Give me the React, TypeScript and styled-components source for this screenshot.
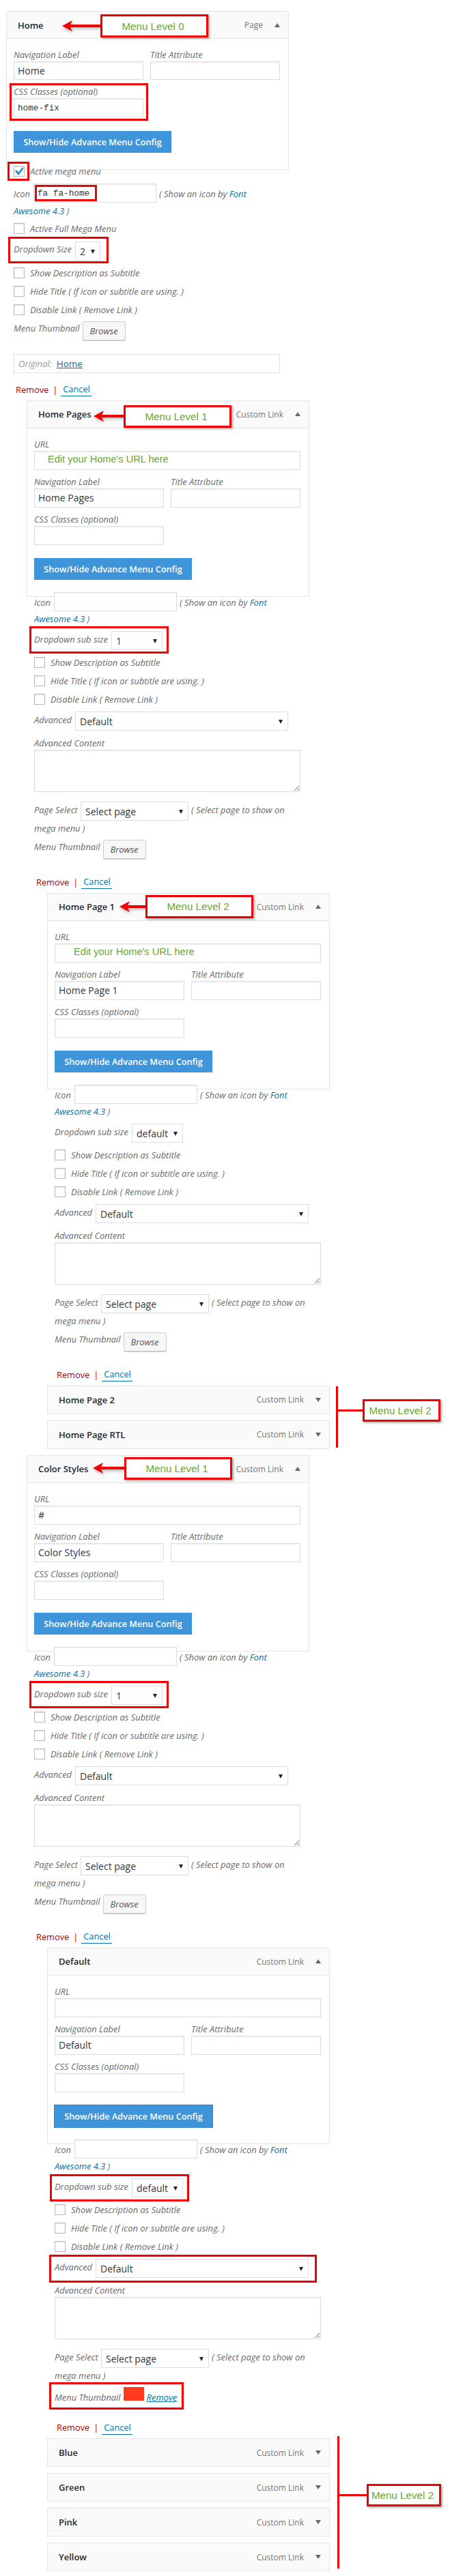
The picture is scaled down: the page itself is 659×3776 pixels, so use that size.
import React from "react";
import styled, { createGlobalStyle } from "styled-components";

const RED = "#f00000";
const GREEN = "#68a82c";
const LABEL = "#6a6a6a";
const LINK = "#0073aa";

const Global = createGlobalStyle`
  html, body { margin: 0; padding: 0; background: #fff; }
  body { font-family: "Open Sans", "Liberation Sans", sans-serif; font-size: 13px; color: #444; }
  * { box-sizing: border-box; }
`;

const Page = styled.main`
  width: 659px;
  height: 3776px;
  padding-top: 16px;
  overflow: hidden;
`;

const Block = styled.section<{ $depth: number }>`
  margin-left: ${(p) => 9 + p.$depth * 30}px;
  width: 414px;
`;

const Card = styled.div`
  width: 414px;
  border: 1px solid #e5e5e5;
  background: #fff;
`;

const Header = styled.div<{ $open?: boolean }>`
  position: relative;
  display: flex;
  align-items: center;
  height: 40px;
  padding: 0 12px 0 16px;
  background: #fafafa;
  border-bottom: ${(p) => (p.$open ? "1px solid #e5e5e5" : "0")};
`;

const Title = styled.h3`
  margin: 0;
  font-size: 13px;
  font-weight: 600;
  color: #23282d;
`;

const Kind = styled.span`
  margin-left: auto;
  font-size: 12px;
  color: #777;
`;

const Caret = styled.span<{ $up?: boolean }>`
  margin-left: 17px;
  width: 0;
  height: 0;
  border-left: 4px solid transparent;
  border-right: 4px solid transparent;
  ${(p) => (p.$up ? "border-bottom: 6px solid #666;" : "border-top: 6px solid #666;")}
`;

const Body = styled.div`
  padding: 13px 12px 24px 10px;
`;

const Label = styled.label<{ $mt?: number; $minW?: number }>`
  display: block;
  flex: none;
  margin-top: ${(p) => p.$mt ?? 0}px;
  min-width: ${(p) => p.$minW ?? 0}px;
  font-style: italic;
  font-size: 12.9px;
  line-height: 20px;
  color: ${LABEL};
  white-space: nowrap;
`;

const Note = styled(Label)`
  color: ${LABEL};
`;

const NoteLink = styled.a`
  color: ${LINK};
  font-style: italic;
`;

const Field = styled.div<{ $mt?: number }>`
  position: relative;
  margin-top: ${(p) => p.$mt ?? 0}px;
`;

const FieldPair = styled.div<{ $mt?: number }>`
  display: grid;
  grid-template-columns: 190px 190px;
  column-gap: 10px;
  margin-top: ${(p) => p.$mt ?? 0}px;
`;

const TextBox = styled.div<{ $h?: number; $w?: number; $pad?: number; $mono?: boolean; $accent?: boolean }>`
  position: relative;
  flex: none;
  width: ${(p) => (p.$w ? `${p.$w}px` : "100%")};
  height: ${(p) => p.$h ?? 28}px;
  padding-left: ${(p) => p.$pad ?? 5}px;
  padding-bottom: ${(p) => (p.$accent ? 3 : 0)}px;
  border: 1px solid #ddd;
  background: #fff;
  box-shadow: inset 0 1px 2px rgba(0, 0, 0, 0.07);
  display: flex;
  align-items: center;
  white-space: nowrap;
  color: ${(p) => (p.$accent ? GREEN : "#32373c")};
  font-family: ${(p) =>
    p.$accent ? '"Liberation Sans", Arial, sans-serif' : p.$mono ? '"Liberation Mono", monospace' : "inherit"};
  font-size: ${(p) => (p.$accent ? 14.6 : p.$mono ? 12.7 : 14)}px;
`;

const ConfigButton = styled.button<{ $mt: number; $focus?: boolean }>`
  display: block;
  width: 231px;
  height: 32px;
  margin-top: ${(p) => p.$mt}px;
  padding: 0;
  border: 0;
  background: #3f95da;
  color: #fff;
  font-family: inherit;
  font-size: 12.7px;
  font-weight: 600;
  ${(p) => (p.$focus ? "box-shadow: 0 0 0 1px #2f80c0;" : "")}
`;

const Settings = styled.div<{ $overlap: number }>`
  position: relative;
  margin-top: -${(p) => p.$overlap}px;
  padding-left: 11px;
`;

const Row = styled.div<{ $mt?: number; $gap?: number; $h?: number }>`
  position: relative;
  display: flex;
  align-items: flex-start;
  gap: ${(p) => p.$gap ?? 4}px;
  margin-top: ${(p) => p.$mt ?? 0}px;
  ${(p) => (p.$h ? `height: ${p.$h}px;` : "")}
`;

const CheckRow = styled.div<{ $mt?: number }>`
  position: relative;
  display: flex;
  align-items: center;
  gap: 8px;
  height: 27px;
  margin-top: ${(p) => p.$mt ?? 0}px;
`;

const CheckBox = styled.span`
  flex: none;
  display: flex;
  align-items: center;
  justify-content: center;
  width: 16px;
  height: 16px;
  border: 1px solid #b4b9be;
  background: #fff;
  box-shadow: inset 0 1px 2px rgba(0, 0, 0, 0.1);
`;

const SelectBox = styled.div<{ $w: number; $h?: number }>`
  flex: none;
  display: flex;
  align-items: center;
  justify-content: space-between;
  width: ${(p) => p.$w}px;
  height: ${(p) => p.$h ?? 28}px;
  padding: 2px 7px 0 6px;
  border: 1px solid #ddd;
  background: #fff;
  color: #32373c;
  font-size: 14px;
  white-space: nowrap;
`;

const SelectArrow = styled.span`
  flex: none;
  width: 0;
  height: 0;
  border-left: 3px solid transparent;
  border-right: 3px solid transparent;
  border-top: 6px solid #222;
`;

const BrowseButton = styled.button`
  flex: none;
  width: 63px;
  height: 28px;
  padding: 0;
  border: 1px solid #ccc;
  border-radius: 3px;
  background: #f7f7f7;
  box-shadow: 0 1px 0 #ccc;
  color: #555;
  font-family: inherit;
  font-style: italic;
  font-size: 12.8px;
`;

const ContentArea = styled.textarea`
  display: block;
  width: 390px;
  height: 62px;
  margin: 0;
  border: 1px solid #ddd;
  background: #fff;
  box-shadow: inset 0 1px 2px rgba(0, 0, 0, 0.07);
`;

const OriginalBox = styled.div`
  display: flex;
  align-items: center;
  gap: 7px;
  width: 390px;
  height: 28px;
  margin-top: 20px;
  padding-left: 6px;
  border: 1px solid #dfdfdf;
  font-style: italic;
  font-size: 12.9px;
  color: #999;
`;

const OriginalLink = styled.a`
  color: ${LINK};
  font-style: normal;
  font-size: 13.5px;
  text-decoration: underline;
`;

const Actions = styled.div<{ $mt: number; $mb?: number }>`
  display: flex;
  align-items: center;
  height: 20px;
  margin-top: ${(p) => p.$mt}px;
  margin-bottom: ${(p) => p.$mb ?? 6}px;
  padding-left: 3px;
  font-size: 12.8px;
  line-height: 20px;
`;

const RemoveAction = styled.a`
  color: #a00;
`;

const Divider = styled.span`
  margin: 0 5px 0 6px;
  color: #a00;
`;

const CancelAction = styled.a`
  padding: 0 2px 0 3px;
  color: ${LINK};
  border-bottom: 1px solid ${LINK};
`;

const Mark = styled.span<{ $top: number; $left: number; $w: number; $h: number }>`
  position: absolute;
  top: ${(p) => p.$top}px;
  left: ${(p) => p.$left}px;
  width: ${(p) => p.$w}px;
  height: ${(p) => p.$h}px;
  border: 3px solid ${RED};
  pointer-events: none;
  z-index: 3;
`;

const Callout = styled.div<{ $top: number; $left: number }>`
  position: absolute;
  top: ${(p) => p.$top}px;
  left: ${(p) => p.$left}px;
  display: flex;
  align-items: center;
  z-index: 3;
`;

const CalloutArrow = styled.svg`
  display: block;
  flex: none;
  filter: drop-shadow(1px 2px 2px rgba(0, 0, 0, 0.3));
`;

const CalloutBox = styled.div<{ $w?: number; $h?: number }>`
  display: flex;
  align-items: center;
  justify-content: center;
  width: ${(p) => p.$w ?? 158}px;
  height: ${(p) => p.$h ?? 34}px;
  padding-right: 4px;
  border: 3px solid ${RED};
  background: #fff;
  box-shadow: 2px 2px 3px rgba(0, 0, 0, 0.3);
  font-family: "Liberation Sans", Arial, sans-serif;
  font-size: 15.2px;
  color: ${GREEN};
  white-space: nowrap;
`;

const Group = styled.div`
  position: relative;
  display: flex;
  flex-direction: column;
  gap: 9px;
  width: 414px;
  margin-left: 69px;
  margin-bottom: 9px;
`;

const CollapsedCard = styled(Card)`
  height: 42px;
`;

const BracketLine = styled.span<{ $top: number; $left: number; $h: number }>`
  position: absolute;
  top: ${(p) => p.$top}px;
  left: ${(p) => p.$left}px;
  width: 3px;
  height: ${(p) => p.$h}px;
  background: ${RED};
`;

const BracketArm = styled.span<{ $top: number; $left: number; $w: number }>`
  position: absolute;
  top: ${(p) => p.$top}px;
  left: ${(p) => p.$left}px;
  width: ${(p) => p.$w}px;
  height: 3px;
  background: ${RED};
`;

const BracketLabel = styled.div<{ $top: number; $left: number }>`
  position: absolute;
  top: ${(p) => p.$top}px;
  left: ${(p) => p.$left}px;
`;

const Swatch = styled.span`
  flex: none;
  width: 30px;
  height: 20px;
  background: #ff3a1e;
`;

const ThumbRemove = styled.a`
  margin-top: 5px;
  line-height: 20px;
  color: ${LINK};
  font-style: italic;
  font-size: 12.9px;
  text-decoration: underline;
`;

const Arrow = ({ w }: { w: number }) => (
  <CalloutArrow width={w} height={16} viewBox={`0 0 ${w} 16`} aria-hidden>
    <path d={`M0 8 L15 0 L12 6 L${w} 6 L${w} 10 L12 10 L15 16 Z`} fill={RED} />
  </CalloutArrow>
);

const Check = () => (
  <svg width="14" height="14" viewBox="0 0 14 14" aria-hidden>
    <path d="M1 7 L3 5 L6 8.5 L12 1 L13.5 3 L6 13 Z" fill="#1e8cbe" />
  </svg>
);

type CalloutSpec = { text: string; arrow: number; top: number; left: number; h: number };

const CardHeader = ({ title, kind, callout, open = true }: { title: string; kind: string; callout?: CalloutSpec; open?: boolean }) => (
  <Header $open={open}>
    <Title>{title}</Title>
    {callout && (
      <Callout $top={callout.top} $left={callout.left}>
        <Arrow w={callout.arrow} />
        <CalloutBox $h={callout.h}>{callout.text}</CalloutBox>
      </Callout>
    )}
    <Kind>{kind}</Kind>
    <Caret $up={open} />
  </Header>
);

const ActionLinks = ({ mt, mb }: { mt: number; mb?: number }) => (
  <Actions $mt={mt} $mb={mb}>
    <RemoveAction>Remove</RemoveAction>
    <Divider>|</Divider>
    <CancelAction>Cancel</CancelAction>
  </Actions>
);

const IconRows = () => (
  <>
    <Row>
      <Label $mt={5} $minW={25}>Icon</Label>
      <TextBox $w={180} $mono />
      <Note $mt={5}>
        ( Show an icon by <NoteLink>Font</NoteLink>
      </Note>
    </Row>
    <Note $mt={1}>
      <NoteLink>Awesome 4.3</NoteLink> )
    </Note>
  </>
);

const Option = ({ children, mt }: { children: React.ReactNode; mt?: number }) => (
  <CheckRow $mt={mt}>
    <CheckBox />
    <Label>{children}</Label>
  </CheckRow>
);

const SubOptions = ({ mt }: { mt: number }) => (
  <>
    <Option mt={mt}>Show Description as Subtitle</Option>
    <Option>Hide Title ( If icon or subtitle are using. )</Option>
    <Option>Disable Link ( Remove Link )</Option>
  </>
);

const Select = ({ value, w }: { value: string; w: number }) => (
  <SelectBox $w={w}>
    {value}
    <SelectArrow />
  </SelectBox>
);

type FormProps = {
  url?: string;
  accent?: boolean;
  urlPad?: number;
  nav: string;
  focus?: boolean;
};

const LinkForm = ({ url, accent, urlPad, nav, focus }: FormProps) => (
  <Body>
    <Field>
      <Label>URL</Label>
      <TextBox $accent={accent} $pad={urlPad}>{url}</TextBox>
    </Field>
    <FieldPair $mt={7}>
      <Field>
        <Label>Navigation Label</Label>
        <TextBox>{nav}</TextBox>
      </Field>
      <Field>
        <Label>Title Attribute</Label>
        <TextBox />
      </Field>
    </FieldPair>
    <Field $mt={7}>
      <Label>CSS Classes (optional)</Label>
      <TextBox $w={190} />
    </Field>
    <ConfigButton $mt={19} $focus={focus}>Show/Hide Advance Menu Config</ConfigButton>
  </Body>
);

type SettingsProps = {
  subValue: string;
  subWidth?: number;
  subMark?: { top: number; h: number };
  advancedMark?: boolean;
  swatch?: boolean;
};

const LinkSettings = ({ subValue, subWidth = 75, subMark, advancedMark, swatch }: SettingsProps) => (
  <Settings $overlap={7}>
    <IconRows />
    <Row $mt={8}>
      {subMark && <Mark $top={subMark.top} $left={-7} $w={204} $h={subMark.h} />}
      <Label $mt={2} $minW={109}>Dropdown sub size</Label>
      <Select value={subValue} w={subWidth} />
    </Row>
    <SubOptions mt={4.5} />
    <Row $mt={4.5}>
      {advancedMark && <Mark $top={-6} $left={-8.5} $w={392} $h={41} />}
      <Label $mt={2} $minW={56}>Advanced</Label>
      <Select value="Default" w={312} />
    </Row>
    <Label $mt={8}>Advanced Content</Label>
    <ContentArea readOnly />
    <Row $mt={14}>
      <Label $mt={2} $minW={64}>Page Select</Label>
      <Select value="Select page" w={158} />
      <Note $mt={2}>( Select page to show on</Note>
    </Row>
    <Note $mt={1.5}>mega menu )</Note>
    {swatch ? (
      <Row $mt={7} $h={26}>
        <Mark $top={-7.5} $left={-8} $w={197} $h={40} />
        <Label $mt={5}>Menu Thumbnail</Label>
        <Swatch />
        <ThumbRemove>Remove</ThumbRemove>
      </Row>
    ) : (
      <Row $mt={7}>
        <Label>Menu Thumbnail</Label>
        <BrowseButton>Browse</BrowseButton>
      </Row>
    )}
    <ActionLinks mt={swatch ? 23 : 23.5} />
  </Settings>
);

const CollapsedItem = ({ title }: { title: string }) => (
  <CollapsedCard>
    <CardHeader title={title} kind="Custom Link" open={false} />
  </CollapsedCard>
);

export default function App() {
  return (
    <Page>
      <Global />

      <Block $depth={0}>
        <Card>
          <CardHeader title="Home" kind="Page" callout={{ text: "Menu Level 0", arrow: 56, top: 4, left: 81, h: 34 }} />
          <Body>
            <FieldPair>
              <Field>
                <Label>Navigation Label</Label>
                <TextBox $h={27}>Home</TextBox>
              </Field>
              <Field>
                <Label>Title Attribute</Label>
                <TextBox $h={27} />
              </Field>
            </FieldPair>
            <Field $mt={7}>
              <Mark $top={-2} $left={-6} $w={203} $h={55} />
              <Label>CSS Classes (optional)</Label>
              <TextBox $w={190} $mono>home-fix</TextBox>
            </Field>
            <ConfigButton $mt={20}>Show/Hide Advance Menu Config</ConfigButton>
          </Body>
        </Card>
        <Settings $overlap={12}>
          <CheckRow>
            <Mark $top={0} $left={-9} $w={32} $h={28} />
            <CheckBox><Check /></CheckBox>
            <Label>Active mega menu</Label>
          </CheckRow>
          <Row $mt={5}>
            <Label $mt={5} $minW={25}>Icon</Label>
            <TextBox $w={180} $mono>
              fa fa-home
              <Mark $top={1} $left={1} $w={91} $h={24} />
            </TextBox>
            <Note $mt={5}>
              ( Show an icon by <NoteLink>Font</NoteLink>
            </Note>
          </Row>
          <Note $mt={1.5}>
            <NoteLink>Awesome 4.3</NoteLink> )
          </Note>
          <Option mt={3}>Active Full Mega Menu</Option>
          <Row $mt={5}>
            <Mark $top={-6.5} $left={-8} $w={147} $h={39} />
            <Label $mt={1.5} $minW={86}>Dropdown Size</Label>
            <Select value="2" w={37} />
          </Row>
          <SubOptions mt={4.5} />
          <Row $mt={3.5}>
            <Label>Menu Thumbnail</Label>
            <BrowseButton>Browse</BrowseButton>
          </Row>
          <OriginalBox>
            Original:
            <OriginalLink>Home</OriginalLink>
          </OriginalBox>
          <ActionLinks mt={14} />
        </Settings>
      </Block>

      <Block $depth={1}>
        <Card>
          <CardHeader title="Home Pages" kind="Custom Link" callout={{ text: "Menu Level 1", arrow: 44, top: 6, left: 97, h: 33 }} />
          <LinkForm url="Edit your Home's URL here" accent urlPad={19} nav="Home Pages" />
        </Card>
        <LinkSettings subValue="1" subMark={{ top: -7, h: 40 }} />
      </Block>

      <Block $depth={2}>
        <Card>
          <CardHeader title="Home Page 1" kind="Custom Link" callout={{ text: "Menu Level 2", arrow: 38, top: 2, left: 105, h: 34 }} />
          <LinkForm url="Edit your Home's URL here" accent urlPad={27} nav="Home Page 1" />
        </Card>
        <LinkSettings subValue="default" />
      </Block>

      <Group>
        <CollapsedItem title="Home Page 2" />
        <CollapsedItem title="Home Page RTL" />
        <BracketLine $top={1} $left={423} $h={90} />
        <BracketArm $top={35} $left={423} $w={40} />
        <BracketLabel $top={20} $left={462}>
          <CalloutBox $w={114} $h={33}>Menu Level 2</CalloutBox>
        </BracketLabel>
      </Group>

      <Block $depth={1}>
        <Card>
          <CardHeader title="Color Styles" kind="Custom Link" callout={{ text: "Menu Level 1", arrow: 46, top: 2, left: 96, h: 33 }} />
          <LinkForm url="#" nav="Color Styles" />
        </Card>
        <LinkSettings subValue="1" subMark={{ top: -7, h: 40 }} />
      </Block>

      <Block $depth={2}>
        <Card>
          <CardHeader title="Default" kind="Custom Link" />
          <LinkForm nav="Default" focus />
        </Card>
        <LinkSettings subValue="default" subMark={{ top: -6, h: 40 }} advancedMark swatch />
      </Block>

      <Group>
        <CollapsedItem title="Blue" />
        <CollapsedItem title="Green" />
        <CollapsedItem title="Pink" />
        <CollapsedItem title="Yellow" />
        <BracketLine $top={-3.5} $left={425} $h={194} />
        <BracketArm $top={82} $left={425} $w={43} />
        <BracketLabel $top={66.5} $left={468}>
          <CalloutBox $w={109} $h={33}>Menu Level 2</CalloutBox>
        </BracketLabel>
      </Group>
    </Page>
  );
}
